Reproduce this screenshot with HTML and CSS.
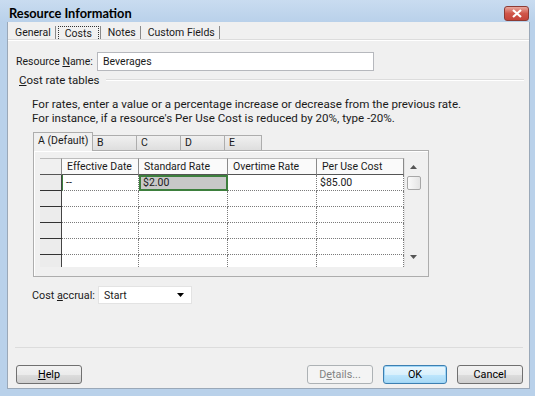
FILE: index.html
```html
<!DOCTYPE html>
<html lang="en">
<head>
    <meta charset="UTF-8">
    <title>Resource Information</title>
    <link rel="stylesheet" href="styles.css">
</head>
<body>
    <div class="window">
        <div class="titlebar">
            <span class="title">Resource Information</span>
            <span class="close-btn">
                <svg width="12" height="9" viewBox="0 0 12 9"><path d="M2 1 L10 8 M10 1 L2 8" stroke="#fff" stroke-width="2.2"/></svg>
            </span>
        </div>
        <div class="client">
            <div class="tabs">
                <span class="tab">General</span>
                <span class="tab active"><span class="focus">Costs</span></span>
                <span class="tab">Notes</span>
                <span class="tab">Custom Fields</span>
            </div>
            <div class="panel">
                <div class="name-row">
                    <label class="name-label">Resource <u>N</u>ame:</label>
                    <div class="textbox">Beverages</div>
                </div>
                <div class="group-title">
                    <span><u>C</u>ost rate tables</span>
                    <span class="group-line"></span>
                </div>
                <p class="hint">
                    For rates, enter a value or a percentage increase or decrease from the previous rate.<br>
                    For instance, if a resource's Per Use Cost is reduced by 20%, type -20%.
                </p>
                <div class="itabs">
                    <span class="itab itab-a">A (Default)</span>
                    <span class="itab">B</span>
                    <span class="itab">C</span>
                    <span class="itab">D</span>
                    <span class="itab itab-e">E</span>
                </div>
                <div class="table-box">
                    <div class="sheet">
                        <div class="cells">
                            <div class="hd corner"></div>
                            <div class="hd">Effective Date</div>
                            <div class="hd">Standard Rate</div>
                            <div class="hd">Overtime Rate</div>
                            <div class="hd">Per Use Cost</div>
                            <!-- rows filled by script -->
                        </div>
                        <div class="vscroll">
                            <svg class="arrow" width="7" height="4" viewBox="0 0 7 4"><path d="M0 4 L3.5 0 L7 4 Z" fill="#555"/></svg>
                            <div class="thumb"></div>
                            <svg class="arrow arrow-down" width="7" height="4" viewBox="0 0 7 4"><path d="M0 0 L3.5 4 L7 0 Z" fill="#555"/></svg>
                        </div>
                    </div>
                </div>
                <div class="accrual-row">
                    <label class="accrual-label">Cost <u>a</u>ccrual:</label>
                    <div class="combo">
                        <span>Start</span>
                        <svg width="7" height="4" viewBox="0 0 7 4"><path d="M0 0 L3.5 4 L7 0 Z" fill="#000"/></svg>
                    </div>
                </div>
            </div>
            <div class="footer">
                <button class="btn"><u>H</u>elp</button>
                <span class="spacer"></span>
                <button class="btn disabled">D<u>e</u>tails...</button>
                <button class="btn default">OK</button>
                <button class="btn">Cancel</button>
            </div>
        </div>
    </div>

    <script>
        const rows = [
            ['--', '$2.00', '', '$85.00'],
            ['', '', '', ''],
            ['', '', '', ''],
            ['', '', '', ''],
            ['', '', '', ''],
            ['', '', '', '']
        ];

        const cells = document.querySelector('.cells');
        rows.forEach((row, i) => {
            const rh = document.createElement('div');
            rh.className = 'rh';
            cells.appendChild(rh);
            row.forEach((value, j) => {
                const cell = document.createElement('div');
                cell.className = 'c';
                if (i === 0 && j === 0) cell.classList.add('active-row');
                if (i === 0 && j === 1) cell.classList.add('selected');
                cell.textContent = value;
                cells.appendChild(cell);
            });
        });
    </script>
</body>
</html>
```

FILE: styles.css
```css
body {
    margin: 0;
    font-family: Roboto, "Open Sans", sans-serif;
    font-size: 11px;
    color: #1a1a1a;
}
.window {
    width: 535px;
    height: 396px;
    box-sizing: border-box;
    padding: 0 5px 7px 7px;
    background-color: #b9d1ea;
    display: flex;
    flex-direction: column;
}
.titlebar {
    height: 22px;
    margin: 0 -5px 0 -7px;
    padding: 0 6px 0 9px;
    background: linear-gradient(#c9dcf0, #b9d1ea);
    display: flex;
    align-items: center;
    justify-content: space-between;
}
.title {
    font-family: Lato, Roboto, sans-serif;
    font-weight: bold;
    font-size: 12.8px;
    color: #000;
    margin-top: 3px;
}
.close-btn {
    width: 23px;
    height: 13px;
    margin-top: 5px;
    border: 1px solid #8c3b34;
    border-radius: 3px;
    background: linear-gradient(#e9a89e, #d0564a 50%, #c4433a);
    display: flex;
    align-items: center;
    justify-content: center;
}
.client {
    flex: 1;
    background-color: #f0f0f0;
    border: 1px solid #9aa8b8;
    border-top: none;
    display: flex;
    flex-direction: column;
}
.tabs {
    height: 18px;
    display: flex;
}
.tab {
    padding: 0 4px 0 7px;
    border-right: 1px solid #8a8a8a;
    margin-top: 4px;
    line-height: 14px;
    display: flex;
    align-items: center;
    font-size: 10.5px;
}
.tab.active {
    padding: 0 1px 0 2px;
}
.focus {
    border: 1px dotted #333;
    padding: 0 6px;
    line-height: 13px;
}
.panel {
    flex: 1;
    border-top: 1px solid #fff;
    box-shadow: 0 -1px 0 #dcdcdc;
}
.name-row {
    display: flex;
    align-items: center;
    margin-top: 11px;
    padding-left: 8px;
}
.name-label {
    width: 81px;
    flex-shrink: 0;
    white-space: nowrap;
    font-size: 10.5px;
}
.textbox {
    width: 270px;
    height: 17px;
    line-height: 17px;
    padding-left: 5px;
    background-color: #fff;
    border: 1px solid #b6b8bd;
    font-size: 10.5px;
}
.group-title {
    display: flex;
    align-items: center;
    height: 14px;
    margin-top: 2px;
    padding-left: 11px;
    padding-right: 5px;
    font-size: 11.5px;
}
.group-line {
    flex: 1;
    margin-left: 6px;
    border-top: 1px solid #dcdcdc;
    border-bottom: 1px solid #fff;
}
.hint {
    margin: 10px 0 0;
    padding-left: 24px;
    line-height: 14px;
    font-size: 11.6px;
}
.itabs {
    display: flex;
    align-items: flex-end;
    height: 18px;
    margin-top: 7px;
    padding-left: 25px;
}
.itab {
    box-sizing: border-box;
    width: 44px;
    height: 15px;
    padding-left: 4px;
    line-height: 14px;
    border: 1px solid #adadad;
    border-bottom: none;
    border-left: none;
    background: linear-gradient(#f0f0f0, #dedede);
    font-size: 10.5px;
}
.itab-a {
    width: 60px;
    height: 19px;
    margin-bottom: -1px;
    line-height: 16px;
    border-left: 1px solid #adadad;
    background: #f0f0f0;
    position: relative;
}
.itab-e {
    width: 37px;
}
.table-box {
    width: 381px;
    height: 117px;
    margin-left: 25px;
    padding: 7px 7px 1px 6px;
    border: 1px solid #adadad;
    box-shadow: inset 1px 1px 0 #fff;
}
.sheet {
    display: flex;
    height: 109px;
    overflow: hidden;
}
.cells {
    display: grid;
    grid-template-columns: 22px 77px 89px 89px 87px;
    grid-template-rows: 17px repeat(6, 16px);
}
.cells > div {
    box-sizing: border-box;
    padding-left: 3px;
    line-height: 15px;
    white-space: nowrap;
    overflow: hidden;
    font-size: 10.5px;
}
.hd {
    background-color: #fafafa;
    border-top: 1px solid #bcbcbc;
    border-right: 1px solid #8a8a8a;
    border-bottom: 1px solid #555;
    padding-left: 5px !important;
}
.corner {
    background-color: #f0f0f0;
}
.rh {
    background-color: #ececec;
    border-right: 1px solid #444;
    border-bottom: 1px solid #333;
}
.c {
    background-color: #fff;
    border-right: 1px dotted #7a7a7a;
    border-bottom: 1px dotted #7a7a7a;
}
.c.active-row {
    border-left: 1px solid #3d7f3d;
}
.c.selected {
    background-color: #c8c8c8;
    border: 2px solid #3d7f3d;
    line-height: 12px !important;
    padding-left: 2px !important;
}
.vscroll {
    width: 17px;
    background-color: #f0f0f0;
    border-left: 1px solid #e2e2e2;
    position: relative;
}
.arrow {
    display: block;
    margin: 7px auto 0;
}
.arrow-down {
    position: absolute;
    left: 5px;
    bottom: 8px;
    margin: 0;
}
.thumb {
    width: 12px;
    height: 12px;
    margin: 7px 0 0 2px;
    border: 1px solid #a7a7a7;
    border-radius: 2px;
    background: linear-gradient(90deg, #fafafa, #e4e4e4);
}
.accrual-row {
    display: flex;
    align-items: center;
    margin-top: 9px;
    padding-left: 24px;
}
.accrual-label {
    width: 66px;
    font-size: 10.8px;
}
.combo {
    box-sizing: border-box;
    width: 94px;
    height: 18px;
    padding: 0 7px 0 5px;
    background-color: #fff;
    border: 1px solid #e3e3e3;
    display: flex;
    align-items: center;
    justify-content: space-between;
    font-size: 10.5px;
}
.footer {
    margin: 0 6px 0 7px;
    padding: 17px 0 4px 1px;
    border-top: 1px solid #dcdcdc;
    display: flex;
    gap: 10px;
}
.spacer {
    flex: 1;
}
.btn {
    width: 66px;
    height: 19px;
    padding: 0;
    font-family: inherit;
    font-size: 10.8px;
    color: #000;
    border: 1px solid #707070;
    border-radius: 3px;
    background: linear-gradient(#f2f2f2, #ebebeb 50%, #dddddd 51%, #cfcfcf);
}
.btn.default {
    width: 64px;
    border-color: #3c7fb1;
    box-shadow: inset 0 0 0 1px #9fd6f7;
    background: linear-gradient(#eaf6fd, #d9f0fc 50%, #bee6fd 51%, #a7d9f5);
}
.btn.disabled {
    color: #838383;
    border-color: #adb2b5;
    background: #f4f4f4;
}
```
